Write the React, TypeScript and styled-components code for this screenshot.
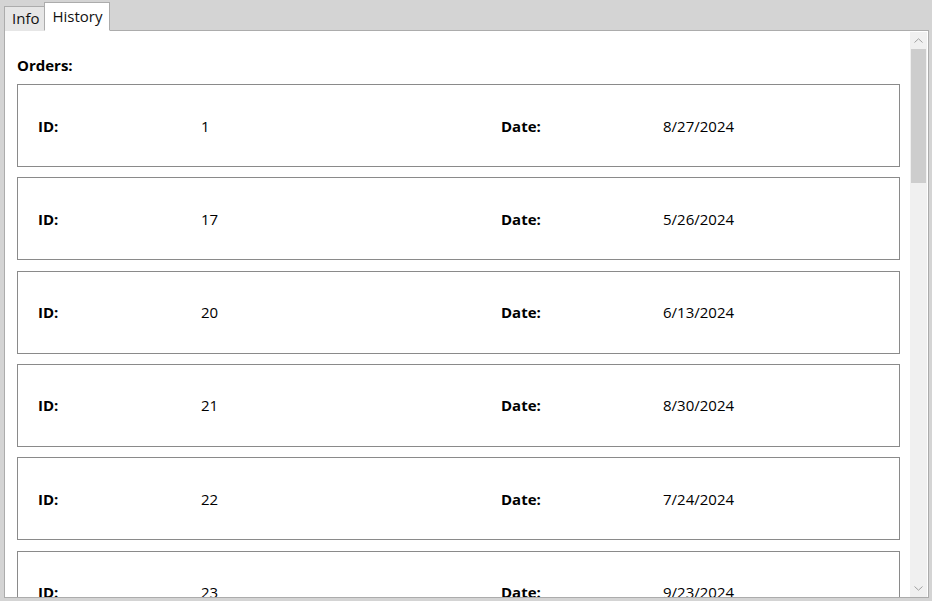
import React from "react";
import styled, { createGlobalStyle } from "styled-components";

const Global = createGlobalStyle`
  html, body { margin: 0; padding: 0; background: #d4d4d4; }
  body { font-family: "Open Sans", "Noto Sans", sans-serif; color: #000; }
  * { box-sizing: border-box; }
`;

const Window = styled.div`
  width: 932px;
  height: 601px;
  background: #d4d4d4;
  padding: 2px 3px 3px 4px;
  display: flex;
  flex-direction: column;
  overflow: hidden;
`;

const TabStrip = styled.div`
  display: flex;
  align-items: flex-end;
  height: 29px;
  margin-bottom: -1px;
  position: relative;
  z-index: 1;
`;

const Tab = styled.div<{ $active?: boolean }>`
  font-size: 15px;
  line-height: 20px;
  border: 1px solid #acacac;
  border-bottom: ${(p) => (p.$active ? "1px solid #fff" : "none")};
  background: ${(p) => (p.$active ? "#fff" : "#e6e6e6")};
  height: ${(p) => (p.$active ? "29px" : "25px")};
  padding: ${(p) => (p.$active ? "3px 7px 0 7px" : "1px 5px 0 7px")};
  margin-left: ${(p) => (p.$active ? "-1px" : "0")};
  color: #111;
`;

const Panel = styled.div`
  flex: 1;
  border: 1px solid #acacac;
  background: #fff;
  display: flex;
  padding: 0 1px 0 0;
  min-height: 0;
`;

const ScrollContent = styled.div`
  flex: 1;
  overflow: hidden;
  padding: 24px 10px 0 12px;
`;

const Heading = styled.div`
  font-size: 15px;
  font-weight: 700;
  line-height: 20px;
  margin-bottom: 9px;
`;

const Card = styled.div`
  height: 83px;
  border: 1px solid #8a8a8a;
  margin-bottom: 10.33px;
  display: grid;
  grid-template-columns: 163px 300px 162px 1fr;
  align-items: center;
  padding: 0 20px;
  font-size: 15px;
  line-height: 20px;
`;

const Label = styled.span`
  font-weight: 700;
`;

const Value = styled.span`
  font-weight: 400;
`;

const ScrollBar = styled.div`
  width: 17px;
  background: #f0f0f0;
  display: flex;
  flex-direction: column;
  margin-top: 1px;
`;

const ArrowBtn = styled.div`
  height: 17px;
  display: flex;
  align-items: center;
  justify-content: center;
`;

const Track = styled.div`
  flex: 1;
  display: flex;
  flex-direction: column;
`;

const Thumb = styled.div`
  height: 134px;
  background: #cdcdcd;
  margin: 0 1px;
`;

const orders = [
  { id: "1", date: "8/27/2024" },
  { id: "17", date: "5/26/2024" },
  { id: "20", date: "6/13/2024" },
  { id: "21", date: "8/30/2024" },
  { id: "22", date: "7/24/2024" },
  { id: "23", date: "9/23/2024" },
];

const Chevron = ({ up }: { up?: boolean }) => (
  <svg width="9" height="5" viewBox="0 0 9 5">
    <path
      d={up ? "M0.5 4.5 L4.5 0.8 L8.5 4.5" : "M0.5 0.5 L4.5 4.2 L8.5 0.5"}
      fill="none"
      stroke="#a0a0a0"
      strokeWidth="1"
    />
  </svg>
);

export default function App() {
  return (
    <>
      <Global />
      <Window>
        <TabStrip>
          <Tab>Info</Tab>
          <Tab $active>History</Tab>
        </TabStrip>
        <Panel>
          <ScrollContent>
            <Heading>Orders:</Heading>
            {orders.map((o) => (
              <Card key={o.id}>
                <Label>ID:</Label>
                <Value>{o.id}</Value>
                <Label>Date:</Label>
                <Value>{o.date}</Value>
              </Card>
            ))}
          </ScrollContent>
          <ScrollBar>
            <ArrowBtn>
              <Chevron up />
            </ArrowBtn>
            <Track>
              <Thumb />
            </Track>
            <ArrowBtn>
              <Chevron />
            </ArrowBtn>
          </ScrollBar>
        </Panel>
      </Window>
    </>
  );
}
